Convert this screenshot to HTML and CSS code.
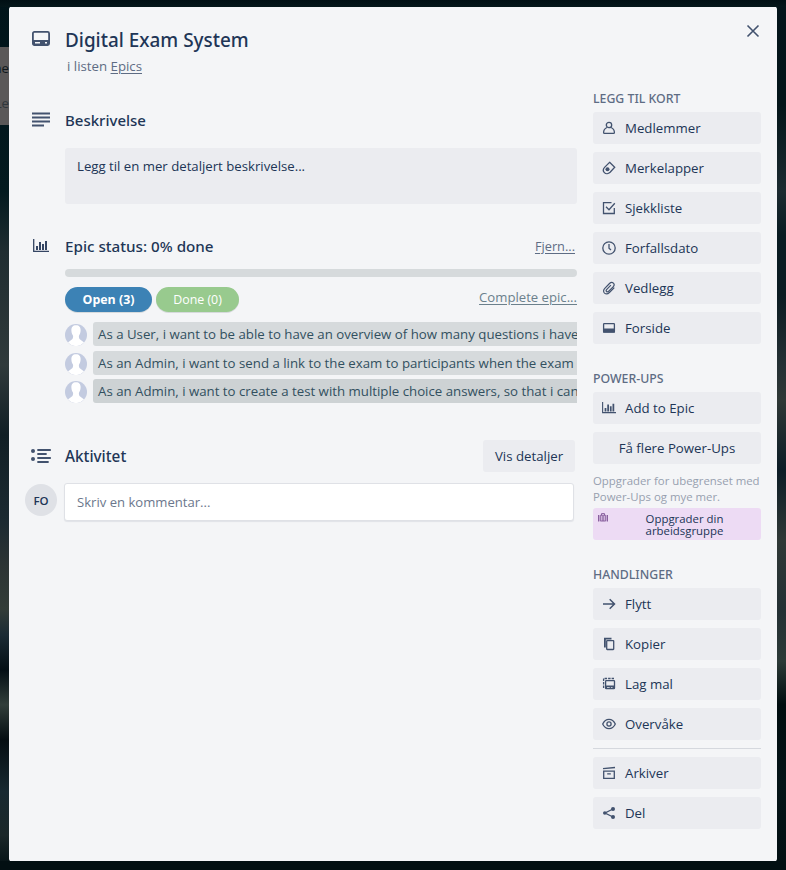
FILE: index.html
```
<!DOCTYPE html>
<html lang="nb">
<head>
<meta charset="utf-8">
<title>Digital Exam System</title>
<link rel="stylesheet" href="styles.css">
</head>
<body>
<div class="board"><div class="board-list"><span>ne</span><span class="add">Le</span></div></div>
<svg width="0" height="0" class="defs">
  <symbol id="chart" viewBox="0 0 16 14"><path d="M.7 0v12.300H16" fill="none" stroke="currentColor" stroke-width="1.300"/><path d="M3 7h2v4H3zM6 3h2v8H6zM9 5h2v6H9zM12 2h2v9h-2z" fill="currentColor"/></symbol>
  <symbol id="person" viewBox="0 0 22 22"><circle cx="11" cy="11" r="11" fill="#c3cbe0"/><path d="M11 1.200c-3.500 0-4.800 2.400-4.600 5.400.1 2 .6 3.500 1.400 4.600.6.9.3 3.300-.6 4.100L3.200 18.200l-.2.400A11 11 0 0 0 19 18.600l-.2-.4-4-2.900c-.9-.8-1.200-3.200-.6-4.100.8-1.100 1.300-2.600 1.400-4.600.2-3-1.100-5.400-4.600-5.400z" fill="#fff"/></symbol>
</svg>
<main class="card">
  <button class="close" aria-label="Lukk"><svg width="14" height="14" viewBox="0 0 14 14"><path d="M1.500 1.500l11 11M12.500 1.500l-11 11"/></svg></button>
  <section class="content">
    <header class="title-row">
      <svg class="line-icon" width="18" height="15" viewBox="0 0 18 15"><rect x=".9" y=".9" width="16.200" height="13.200" rx="1.500" fill="none" stroke="currentColor" stroke-width="1.800"/><path d="M1 9h16v5H1z" fill="currentColor"/><path d="M3 11h5v1.500H3zM13 11h2v1.500h-2z" fill="#f4f5f7"/></svg>
      <div><h1>Digital Exam System</h1><p class="in-list">i listen <a>Epics</a></p></div>
    </header>

    <div class="section-head desc-head">
      <svg class="line-icon" width="18" height="16" viewBox="0 0 18 16"><path d="M0 1.500h18M0 5.500h18M0 9.500h18M0 13.500h12" fill="none" stroke="currentColor" stroke-width="1.800"/></svg>
      <h2>Beskrivelse</h2>
    </div>
    <div class="desc">Legg til en mer detaljert beskrivelse...</div>

    <div class="section-head epic-head">
      <svg class="chart-icon" width="16" height="14"><use href="#chart"/></svg>
      <h2>Epic status: 0% done</h2><a class="remove">Fjern...</a>
    </div>
    <div class="indent">
      <div class="progress"></div>
      <div class="filters"><span class="pill open">Open (3)</span><span class="pill done">Done (0)</span><a class="complete">Complete epic...</a></div>
      <ul class="tasks">
        <li><svg width="22" height="22"><use href="#person"/></svg><span>As a User, i want to be able to have an overview of how many questions i have</span></li>
        <li><svg width="22" height="22"><use href="#person"/></svg><span>As an Admin, i want to send a link to the exam to participants when the exam</span></li>
        <li class="dark"><svg width="22" height="22"><use href="#person"/></svg><span>As an Admin, i want to create a test with multiple choice answers, so that i can</span></li>
      </ul>
    </div>

    <div class="section-head activity-head">
      <svg class="list-icon" width="20" height="16" viewBox="0 0 20 16"><circle cx="2" cy="3" r="2" fill="currentColor"/><circle cx="2" cy="11" r="2" fill="currentColor"/><path d="M7 2h12.200M7 6h8M7 10h12.200M7 14h10" fill="none" stroke="currentColor" stroke-width="1.800" stroke-linecap="round"/></svg>
      <h2>Aktivitet</h2><button class="btn details">Vis detaljer</button>
    </div>
    <div class="comment"><span class="avatar">FO</span><div class="comment-box">Skriv en kommentar...</div></div>
  </section>

  <aside class="sidebar">
    <h3>LEGG TIL KORT</h3>
    <div class="group">
      <button class="btn"><svg viewBox="0 0 14 14"><circle cx="7" cy="4" r="2.700"/><path d="M5 6.500C2.400 7.500 1.600 9.200 1.600 11.500c0 .6.300.9.900.9h9c.6 0 .9-.3.900-.9 0-2.300-.8-4-3.400-5"/></svg>Medlemmer</button>
      <button class="btn"><svg viewBox="0 0 14 14"><path d="M7.600 1.300l5.100 5-4.600 5c-1.700 1.600-4.300 1.700-5.700.3s-1.200-3.800.4-5.500z"/><circle class="solid" cx="5.500" cy="8.300" r="2"/></svg>Merkelapper</button>
      <button class="btn"><svg viewBox="0 0 14 14"><path d="M9.500 1.700h-8v10.800h10.800V7M4 5.700l3 3.100 5.800-6.600"/></svg>Sjekkliste</button>
      <button class="btn"><svg viewBox="0 0 14 14"><circle cx="7" cy="7" r="6.200"/><path d="M7 3v4.200L9 9"/></svg>Forfallsdato</button>
      <button class="btn"><svg viewBox="0 0 14 14"><path d="M12.300 6.600l-4.900 4.900c-1.500 1.500-3.500 1.700-4.900.6-1.300-1.200-1.200-3.200.3-4.700L7.500 2.500c1.200-1.200 2.900-1.300 3.900-.4.900.9.900 2.500-.3 3.700L6.700 10.200c-.7.700-1.600.8-2.200.3-.5-.6-.4-1.500.3-2.200l4.100-4.100" stroke-width="1.200"/></svg>Vedlegg</button>
      <button class="btn"><svg viewBox="0 0 14 14"><rect x="1.600" y="2.600" width="10.800" height="8.600" rx=".6"/><path class="solid" d="M1 7.500h12v4H1z"/></svg>Forside</button>
    </div>
    <h3 class="gap">POWER-UPS</h3>
    <div class="group">
      <button class="btn"><svg class="plain" viewBox="0 0 16 14"><use href="#chart"/></svg>Add to Epic</button>
      <button class="btn center">Få flere Power-Ups</button>
    </div>
    <p class="promo">Oppgrader for ubegrenset med<br>Power-Ups og mye mer.</p>
    <button class="upgrade"><svg width="10" height="10" viewBox="0 0 10 10"><path d="M0 2h1.300v6.500H0zM8.700 2H10v6.500H8.700z" fill="currentColor"/><path d="M2.300 2.300h5.400v5.700H2.300zM3.500 2.300V.6h3v1.700M4.200 3v5M5.800 3v5" fill="none" stroke="currentColor"/></svg><span>Oppgrader din<br>arbeidsgruppe</span></button>
    <h3 class="gap">HANDLINGER</h3>
    <div class="group">
      <button class="btn"><svg viewBox="0 0 14 14"><path d="M1 7h11.400M7.700 2.200L12.500 7l-4.800 4.800" stroke-width="1.500"/></svg>Flytt</button>
      <button class="btn"><svg viewBox="0 0 14 14"><rect x="4.700" y="3.600" width="7" height="8.900" rx=".5"/><path d="M2.900 10.500V1.700H9.500" stroke-width="1.800"/></svg>Kopier</button>
      <button class="btn"><svg viewBox="0 0 14 14"><rect x="3.600" y="3.600" width="8.900" height="8" rx=".6"/><path d="M1.600 11V1.500H12" stroke-dasharray="2.500 1"/><path class="solid" d="M3.500 8.500h9v3h-2v-1.300h-1.600v1.300H7.700v-1.300H5v1.300H3.500z"/></svg>Lag mal</button>
      <button class="btn"><svg viewBox="0 0 14 14"><path d="M.7 7C2.100 4 4.300 2.300 7 2.300S11.900 4 13.300 7C11.900 10 9.700 11.700 7 11.700S2.100 10 .7 7z"/><circle cx="7" cy="7" r="2.100"/></svg>Overvåke</button>
    </div>
    <hr>
    <div class="group">
      <button class="btn"><svg viewBox="0 0 14 14"><path d="M1.700 5.100h10.600v7.300H1.700zM1 2.700l12-1.200M5.200 7.800h3.600"/></svg>Arkiver</button>
      <button class="btn"><svg viewBox="0 0 14 14"><path d="M11 3L3 7l8 4"/><circle class="solid" cx="11" cy="3" r="2"/><circle class="solid" cx="2.800" cy="7" r="1.800"/><circle class="solid" cx="11" cy="11" r="2"/></svg>Del</button>
    </div>
  </aside>
</main>
</body>
</html>
```
FILE: styles.css
```
* { box-sizing: border-box; }
body {
  margin: 0; height: 870px; overflow: hidden; position: relative;
  padding: 7px 9px 9px;
  font: 13.25px/20px "Open Sans", "Noto Sans", sans-serif;
  color: #213556;
  background:
    linear-gradient(#000f14, #04161a) top / 100% 7px no-repeat,
    linear-gradient(#020f12, #020f12) bottom / 100% 9px no-repeat,
    linear-gradient(#03141a 0, #031519 12%, #1c2b30 22%, #091c22 27%, #0b1c22 34%, #243034 42%, #2f3836 46%, #0c1d26 54%, #2f3836 62%, #243034 70%, #2c3a37 76%, #000d0f 81%, #041417 90%, #020f12) right / 10px 100% no-repeat,
    linear-gradient(#00141a 0, #031a1f 22%, #202d31 29%, #303a3b 42%, #111f25 50%, #1c2a31 60%, #2c3434 65%, #333d38 70%, #1b2b34 73%, #040f15 77%, #313e3a 81%, #050e12 85%, #182931 91%, #1b2729 96%, #020f12) left / 10px 100% no-repeat;
}
.board { position: absolute; left: 0; top: 47px; }
.board-list { width: 10px; height: 78px; overflow: hidden; background: #5a5858; color: #10181c; display: flex; flex-direction: column; align-items: flex-end; padding: 11px 1px 0 0; gap: 15px; }
.board-list .add { color: #30373c; }
.defs { position: absolute; }
a { text-decoration: underline; text-underline-offset: 2px; }
h1, h2, h3, p, ul { margin: 0; padding: 0; }
button { font: inherit; color: inherit; border: 0; padding: 0; margin: 0; }

.card { position: relative; height: 854px; background: #f4f5f7; border-radius: 2px; display: flex; gap: 16px; padding: 0 16px; }
.close { position: absolute; top: 17px; right: 17px; background: none; height: 14px; display: flex; color: #42526e; }
.close svg { fill: none; stroke: currentColor; stroke-width: 1.6; }

.content { width: 552px; flex: none; padding-top: 20px; }
h1, h2, h3 { font-family: "Noto Sans", sans-serif; font-weight: 500; }
.line-icon, .chart-icon, .list-icon { flex: none; color: #42526e; }
.title-row { display: flex; height: 76px; padding-left: 7px; gap: 15px; }
.title-row .line-icon { margin-top: 4px; }
h1 { font-size: 18.9px; line-height: 26px; }
.in-list { margin: 3px 0 0 2px; color: #5e6c84; line-height: 20px; }
.section-head { display: flex; align-items: center; height: 32px; }
h2 { font-size: 15px; line-height: 22px; flex: 1; }
.line-icon + h2 { margin-left: 15px; }
.section-head .line-icon { margin-left: 7px; }
.chart-icon { margin: 0 16px 0 8px; color: #344563; }
.list-icon { margin: 0 14px 0 6px; }
.desc-head { margin-top: 1px; }
.desc { margin: 12px 0 0 40px; height: 56px; background: #ebecf0; border-radius: 3px; padding: 8px 12px; line-height: 20px; font-size: 13.2px; }
.epic-head { margin-top: 26px; }
.epic-head h2 { font-size: 15.2px; }
.remove { color: #5e6c84; margin-right: 2px; font-size: 12.75px; }
.indent { margin-left: 40px; }
.progress { margin-top: 7px; height: 8px; border-radius: 4px; background: #d6dadc; }
.filters { display: flex; gap: 4px; margin-top: 10px; height: 25px; }
.pill { height: 25px; border-radius: 13px; color: #fff; text-align: center; line-height: 26px; font-size: 12.4px; box-shadow: 0 1px 0 #d6dadc; }
.open { width: 87px; background: #3c82b5; font-weight: 700; }
.done { width: 83px; background: #98ca8e; }
.complete { margin-left: auto; color: #6b808c; line-height: 20px; font-size: 13.15px; }
.tasks { list-style: none; margin-top: 10px; display: grid; grid-template-columns: minmax(0, 1fr); gap: 4.500px; }
.tasks li { display: flex; gap: 6px; height: 24px; align-items: center; color: #32505f; }
.tasks svg { flex: none; margin-top: 2px; }
.tasks span { flex: 1; min-width: 0; height: 24px; line-height: 24px; white-space: nowrap; overflow: hidden; background: #d6dadc; border-radius: 3px 0 0 3px; padding-left: 5px; }
.tasks .dark span { background: #cdd2d4; }
.activity-head { margin-top: 37px; }
.activity-head h2 { font-size: 15.3px; }
.btn { display: flex; align-items: center; width: 168px; height: 32px; background: #ebecf0; border-radius: 3px; padding: 0 9px; }
.details { width: 92px; margin-right: 2px; justify-content: center; padding: 0; }
.comment { display: flex; gap: 7px; margin-top: 11px; }
.avatar { width: 32px; height: 32px; margin-top: 1px; border-radius: 50%; background: #dfe1e6; text-align: center; font-size: 11.5px; line-height: 33px; font-weight: 600; }
.comment-box { width: 510px; height: 38px; border-radius: 3px; background: #fff; border: 1px solid #dfe1e6; box-shadow: 0 1px 1px #091e4214; padding: 8px 12px; line-height: 20px; color: #6b778c; font-size: 13.1px; }

.sidebar { width: 168px; padding-top: 82px; }
h3 { font-size: 12.3px; line-height: 20px; height: 23px; color: #5e6c84; }
.group { display: grid; gap: 8px; }
.sidebar .btn svg { width: 14px; height: 14px; margin-right: 9px; fill: none; stroke: #42526e; stroke-width: 1.3; color: #42526e; flex: none; }
.sidebar .btn .solid { fill: #42526e; stroke: none; }
.sidebar .btn .plain { stroke: none; }
.sidebar .btn.center { justify-content: center; }
.gap { margin-top: 25px; }
.promo { margin-top: 9px; font-size: 11.4px; line-height: 16px; color: #97a0af; white-space: nowrap; }
.upgrade { display: flex; width: 168px; height: 32px; margin-top: 3px; background: #eddbf4; border-radius: 3px; padding: 5px; font-size: 11.4px; line-height: 12px; }
.upgrade svg { color: #89609e; flex: none; }
.upgrade span { flex: 1; margin-left: 5px; text-align: center; }
hr { border: 0; height: 1px; background: #d5d8de; margin: 8px 0; }
```
